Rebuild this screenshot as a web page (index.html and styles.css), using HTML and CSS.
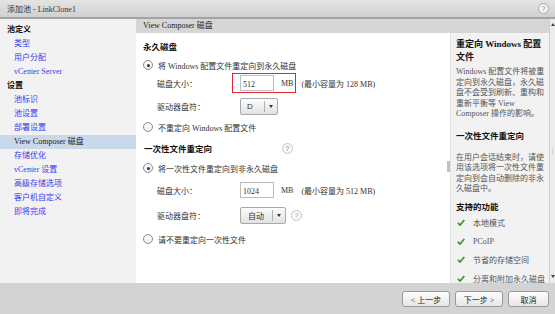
FILE: index.html
```html
<!DOCTYPE html>
<html lang="zh">
<head>
    <meta charset="UTF-8">
    <title>添加池 - LinkClone1</title>
    <link rel="stylesheet" href="styles.css">
</head>
<body>
<div class="dialog">
    <div class="titlebar">
        <span>添加池 - LinkClone1</span>
        <span class="help">?</span>
    </div>

    <div class="body">
        <ul class="nav">
            <li class="group">池定义</li>
            <li>类型</li>
            <li>用户分配</li>
            <li>vCenter Server</li>
            <li class="group">设置</li>
            <li>池标识</li>
            <li>池设置</li>
            <li>部署设置</li>
            <li class="active">View Composer 磁盘</li>
            <li>存储优化</li>
            <li>vCenter 设置</li>
            <li>高级存储选项</li>
            <li>客户机自定义</li>
            <li>即将完成</li>
        </ul>

        <div class="main">
            <div class="main-head">View Composer 磁盘</div>
            <div class="main-body">
                <div class="content">
                    <div class="section-title t1">永久磁盘</div>
                    <div class="option o1"><span class="radio on"></span>将 Windows 配置文件重定向到永久磁盘</div>
                    <div class="field f1">
                        <span class="field-label">磁盘大小：</span>
                        <span class="field-box marked">
                            <input class="num" type="text" value="512">
                            <span class="unit">MB</span>
                        </span>
                        <span class="note">(最小容量为 128 MB)</span>
                    </div>
                    <div class="field d1">
                        <span class="field-label">驱动器盘符：</span>
                        <span class="field-box">
                            <span class="select"><span class="select-val">D</span><span class="select-arrow"><i></i></span></span>
                        </span>
                    </div>
                    <div class="option o2"><span class="radio"></span>不重定向 Windows 配置文件</div>

                    <div class="section-title t2"><span class="title-text">一次性文件重定向</span><span class="help small">?</span></div>
                    <div class="option o3"><span class="radio on"></span>将一次性文件重定向到非永久磁盘</div>
                    <div class="field f2">
                        <span class="field-label">磁盘大小：</span>
                        <span class="field-box">
                            <input class="num" type="text" value="1024">
                            <span class="unit">MB</span>
                        </span>
                        <span class="note">(最小容量为 512 MB)</span>
                    </div>
                    <div class="field d2">
                        <span class="field-label">驱动器盘符：</span>
                        <span class="field-box">
                            <span class="select wide"><span class="select-val">自动</span><span class="select-arrow"><i></i></span></span>
                            <span class="help small">?</span>
                        </span>
                    </div>
                    <div class="option o4"><span class="radio"></span>请不要重定向一次性文件</div>
                </div>

                <div class="splitter"><span class="grip"></span></div>

                <div class="info">
                    <h3 class="info-title">重定向 Windows 配置文件</h3>
                    <p class="p1">Windows 配置文件将被重定向到永久磁盘，永久磁盘不会受到刷新、重构和重新平衡等 View Composer 操作的影响。</p>
                    <h4 class="h2">一次性文件重定向</h4>
                    <p class="p2">在用户会话结束时，请使用该选项将一次性文件重定向到会自动删除的非永久磁盘中。</p>
                    <h4 class="h3">支持的功能</h4>
                    <ul class="features">
                        <li><svg width="8" height="7" viewBox="0 0 8 7"><path d="M0.8 3.8 L3 6 L7.3 1" fill="none" stroke="#3f9a2c" stroke-width="1.8"/></svg>本地模式</li>
                        <li><svg width="8" height="7" viewBox="0 0 8 7"><path d="M0.8 3.8 L3 6 L7.3 1" fill="none" stroke="#3f9a2c" stroke-width="1.8"/></svg>PCoIP</li>
                        <li><svg width="8" height="7" viewBox="0 0 8 7"><path d="M0.8 3.8 L3 6 L7.3 1" fill="none" stroke="#3f9a2c" stroke-width="1.8"/></svg>节省的存储空间</li>
                        <li><svg width="8" height="7" viewBox="0 0 8 7"><path d="M0.8 3.8 L3 6 L7.3 1" fill="none" stroke="#3f9a2c" stroke-width="1.8"/></svg>分离和附加永久磁盘</li>
                    </ul>
                </div>
            </div>
        </div>

        <div class="scrollbar">
            <span class="arrow up"></span>
            <span class="thumb-grip">⋮</span>
            <span class="arrow down"></span>
        </div>
    </div>

    <div class="footer">
        <button class="btn prev">&lt; 上一步</button>
        <button class="btn next">下一步 &gt;</button>
        <button class="btn cancel">取消</button>
    </div>
</div>
</body>
</html>
```

FILE: styles.css
```css
body {
    margin: 0;
    font-family: "Liberation Serif", "Noto Sans CJK SC", serif;
    font-size: 8px;
    color: #333;
    background: #d3d3d3;
}
.dialog {
    width: 555px;
    height: 314px;
    display: flex;
    flex-direction: column;
    overflow: hidden;
}

/* title bar */
.titlebar {
    height: 17px;
    border-bottom: 2px solid #a2a2a2;
    background: linear-gradient(#e4e4e4, #d0d0d0);
    display: flex;
    align-items: center;
    justify-content: space-between;
    padding: 0 6px 0 7px;
    color: #333;
}
.help {
    width: 9px;
    height: 9px;
    border: 1px solid #a8a8a8;
    border-radius: 50%;
    background: #f4f4f4;
    color: #8a8a8a;
    font-family: "Liberation Sans", sans-serif;
    font-size: 7px;
    line-height: 9px;
    text-align: center;
}
.help.small {
    border-color: #c4c4c4;
    background: #fafafa;
    color: #aaa;
}

.body {
    display: flex;
    height: 264px;
}

/* left nav */
.nav {
    width: 137px;
    margin: 0;
    padding: 4px 0 0;
    list-style: none;
    background: #f2f2f2;
}
.nav li {
    height: 14px;
    line-height: 14px;
    padding-left: 14px;
    color: #3a3af2;
}
.nav li.group {
    padding-left: 7px;
    color: #111;
    font-weight: bold;
}
.nav li.active {
    background: #c9d8ea;
    color: #222;
}

/* main */
.main {
    flex: 1;
    display: flex;
    flex-direction: column;
}
.main-head {
    height: 14px;
    line-height: 14px;
    padding-left: 7px;
    background: #d6d6d6;
    color: #222;
}
.main-body {
    flex: 1;
    display: flex;
    min-height: 0;
}
.content {
    width: 302px;
    padding-left: 7px;
    background: #fff;
}
.section-title {
    height: 14px;
    display: flex;
    align-items: center;
    font-size: 8.5px;
    font-weight: bold;
    color: #111;
}
.title-text {
    width: 138px;
    padding-left: 1px;
}
.option {
    height: 14px;
    display: flex;
    align-items: center;
    gap: 5px;
}
.radio {
    width: 8px;
    height: 8px;
    border: 1px solid #8c8c8c;
    border-radius: 50%;
    background: linear-gradient(#fff, #ececec);
    display: flex;
    align-items: center;
    justify-content: center;
}
.radio.on::after {
    content: "";
    width: 3px;
    height: 3px;
    border-radius: 50%;
    background: #333;
}
.field {
    display: flex;
    align-items: center;
    padding-left: 14px;
}
.field-label {
    width: 75px;
}
.field-box {
    height: 18px;
    display: flex;
    align-items: center;
    border: 1px solid transparent;
    padding: 0 2px 0 7px;
}
.field-box.marked {
    border-color: #e0262b;
}
.num {
    box-sizing: border-box;
    width: 34px;
    height: 16px;
    border: 1px solid #bcbcbc;
    padding: 2px 0 0 2px;
    font: inherit;
    color: #333;
    outline: none;
}
.unit {
    margin-left: 7px;
}
.note {
    margin-left: 5px;
}
.select {
    height: 15px;
    display: flex;
    align-items: center;
    border: 1px solid #a9a9a9;
    border-radius: 2px;
    background: linear-gradient(#fcfcfc, #e2e2e2);
}
.select-val {
    width: 17px;
    padding-left: 6px;
    font-family: "Liberation Sans", "Noto Sans CJK SC", sans-serif;
}
.select.wide .select-val {
    width: 24px;
    padding-left: 7px;
}
.select-arrow {
    width: 12px;
    height: 11px;
    border-left: 1px solid #b0b0b0;
    display: flex;
    align-items: center;
    justify-content: center;
}
.select-arrow i {
    border-left: 2.5px solid transparent;
    border-right: 2.5px solid transparent;
    border-top: 3px solid #333;
}
.d2 .help {
    margin-left: 5px;
}

.t1 { margin-top: 6px; }
.o1 { margin-top: 5px; }
.f1 { margin-top: 1px; }
.d1 { margin-top: 3px; }
.o2 { margin-top: 4px; }
.t2 { margin-top: 7px; }
.o3 { margin-top: 6px; }
.f2 { margin-top: 5px; }
.d2 { margin-top: 5px; }
.o4 { margin-top: 7px; }

.splitter {
    width: 5px;
    background: #fff;
    display: flex;
    align-items: center;
}
.grip {
    width: 3px;
    height: 11px;
    margin-top: 16px;
    margin-left: 2px;
    background: #c2c2c2;
}

/* help panel */
.info {
    width: 90px;
    padding: 5px 3px 0 5px;
    background: #f2f2f2;
    border-left: 1px solid #e2e2e2;
    overflow: hidden;
    color: #555;
}
.info h3, .info h4 {
    margin: 0;
    font-weight: bold;
    color: #111;
}
.info-title {
    font-size: 9px;
    line-height: 12.5px;
}
.info h4 {
    font-size: 8.5px;
    line-height: 12px;
}
.info p {
    margin: 0;
    line-height: 10.5px;
}
.p1 { margin-top: 4px !important; }
.h2 { margin-top: 10px !important; }
.p2 { margin-top: 11px !important; }
.h3 { margin-top: 6px !important; }
.features {
    list-style: none;
    margin: 1px 0 0;
    padding: 0;
}
.features li {
    height: 18.5px;
    display: flex;
    align-items: center;
    gap: 8px;
    padding-left: 1px;
}

/* outer scrollbar */
.scrollbar {
    width: 5px;
    border-left: 1px solid #d0d0d0;
    background: #ececec;
    display: flex;
    flex-direction: column;
    align-items: center;
    justify-content: space-between;
    padding: 4px 0 5px;
}
.arrow {
    border-left: 2px solid transparent;
    border-right: 2px solid transparent;
}
.arrow.up { border-bottom: 3px solid #444; }
.arrow.down { border-top: 3px solid #444; }
.thumb-grip {
    font-size: 7px;
    color: #888;
    font-family: "DejaVu Sans", sans-serif;
}

/* footer */
.footer {
    flex: 1;
    display: flex;
    justify-content: flex-end;
    align-items: flex-start;
    gap: 5px;
    padding: 8px 6px 0 0;
    background: #d3d3d3;
}
.btn {
    height: 16px;
    padding: 0;
    border: 1px solid #9a9a9a;
    border-radius: 3px;
    background: linear-gradient(#ffffff, #e6e6e6);
    font-family: "Liberation Serif", "Noto Sans CJK SC", serif;
    font-size: 8px;
    color: #222;
}
.prev, .next { width: 48px; }
.cancel { width: 41px; }
```
